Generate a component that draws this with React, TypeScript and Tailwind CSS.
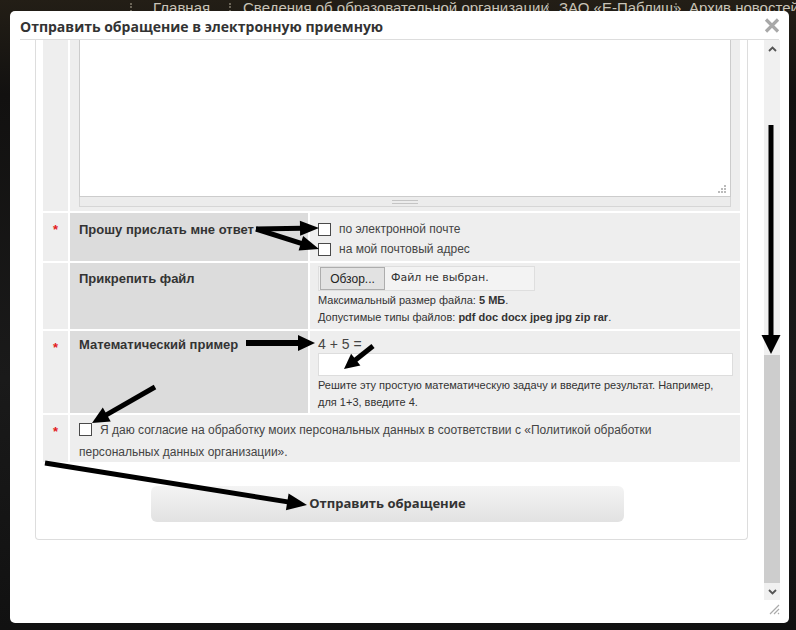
import React from "react";

type ArrowProps = { x1: number; y1: number; x2: number; y2: number; w?: number; hl?: number; hw?: number };

function Arrow({ x1, y1, x2, y2, w = 5, hl = 18, hw = 16 }: ArrowProps) {
  const dx = x2 - x1;
  const dy = y2 - y1;
  const len = Math.hypot(dx, dy);
  const ux = dx / len;
  const uy = dy / len;
  const bx = x2 - ux * hl;
  const by = y2 - uy * hl;
  const px = -uy;
  const py = ux;
  return (
    <g>
      <line x1={x1} y1={y1} x2={bx + ux * 2} y2={by + uy * 2} stroke="#000" strokeWidth={w} />
      <polygon
        points={`${x2},${y2} ${bx + (px * hw) / 2},${by + (py * hw) / 2} ${bx - (px * hw) / 2},${by - (py * hw) / 2}`}
        fill="#000"
      />
    </g>
  );
}

function Sep() {
  return <span className="mt-[3px] h-[9px] w-0 border-l-2 border-dotted border-[#6b6558]" />;
}

function Checkbox() {
  return <span className="inline-block h-[13px] w-[13px] shrink-0 border border-[#4a4a4a] bg-white" />;
}

function Star() {
  return (
    <div className="flex w-[25px] shrink-0 justify-center bg-[#eeeeee] pt-[10px]">
      <span className="text-[13px] leading-[14px] font-bold text-[#e31b1b]">*</span>
    </div>
  );
}

export default function App() {
  const arial = { fontFamily: '"Liberation Sans", Arial, sans-serif' };
  return (
    <div
      className="relative h-[630px] w-[796px] overflow-hidden bg-[linear-gradient(180deg,#231e16_0%,#121110_15%,#1a1a1a_60%,#111_100%)]"
      style={arial}
    >
      {/* site nav behind the modal */}
      <div className="flex h-[11px] overflow-hidden whitespace-nowrap text-[15px] leading-[15px] text-[#c9c4b8]">
        <div className="w-[130px] shrink-0" />
        <Sep />
        <div className="w-[21px] shrink-0" />
        <div className="w-[76px] shrink-0">Главная</div>
        <Sep />
        <div className="w-[12px] shrink-0" />
        <div className="w-[304px] shrink-0">Сведения об образовательной организации</div>
        <Sep />
        <div className="w-[10px] shrink-0" />
        <div className="w-[116px] shrink-0">ЗАО «Е-Паблиш»</div>
        <Sep />
        <div className="w-[12px] shrink-0" />
        <div className="shrink-0">Архив новостей</div>
      </div>

      {/* dialog */}
      <div className="ml-[10px] flex h-[612px] w-[779px] flex-col rounded-[5px] bg-white">
        <div className="mx-[10px] flex h-[29px] shrink-0 items-start justify-between border-b border-[#dddddd]">
          <div
            className="mt-[8px] text-[14px] leading-[16px] font-bold text-[#333]"
            style={{ fontFamily: '"Open Sans", sans-serif' }}
          >
            Отправить обращение в электронную приемную
          </div>
          <svg width="16" height="15" viewBox="0 0 16 15" className="mt-[7px] mr-[-1px]">
            <path d="M2 1.5 L14 13.5 M14 1.5 L2 13.5" stroke="#a8a8a8" strokeWidth="3.2" />
          </svg>
        </div>

        <div className="flex min-h-0 flex-1">
          {/* scrolled content */}
          <div className="w-[754px] shrink-0 overflow-hidden pl-[25px] pr-[16px]">
            <div className="rounded-b-[4px] border border-t-0 border-[#dddddd] px-[7px] pb-[17px]">
              <div className="flex flex-col gap-[2px] text-[#333]">
                {/* textarea row */}
                <div className="flex h-[171px] gap-[2px]">
                  <div className="w-[25px] shrink-0 bg-[#eeeeee]" />
                  <div className="flex-1 bg-[#eeeeee] px-[9px]">
                    <div className="relative h-[157px] border-x border-b border-[#cccccc] bg-white">
                      <svg width="9" height="9" viewBox="0 0 9 9" className="absolute right-[3px] bottom-[2px]">
                        <rect x="6" y="0" width="2" height="2" fill="#bbb" />
                        <rect x="3" y="3" width="2" height="2" fill="#bbb" />
                        <rect x="6" y="3" width="2" height="2" fill="#bbb" />
                        <rect x="0" y="6" width="2" height="2" fill="#bbb" />
                        <rect x="3" y="6" width="2" height="2" fill="#bbb" />
                        <rect x="6" y="6" width="2" height="2" fill="#bbb" />
                      </svg>
                    </div>
                    <div className="flex h-[10px] items-center justify-center border-x border-b border-[#d6d6d6] bg-[#ececec]">
                      <div className="flex w-[26px] flex-col gap-[2px]">
                        <div className="h-px bg-[#c4c4c4]" />
                        <div className="h-px bg-[#c4c4c4]" />
                      </div>
                    </div>
                  </div>
                </div>

                {/* reply row */}
                <div className="flex h-[48px] gap-[2px]">
                  <Star />
                  <div className="w-[238px] shrink-0 bg-[#dcdcdc] pt-[9px] pl-[9px] text-[13px] leading-[15px] font-bold">
                    Прошу прислать мне ответ
                  </div>
                  <div className="flex flex-1 flex-col gap-[7px] bg-[#eeeeee] pt-[10px] pl-[8px] text-[12px] leading-[13px] text-[#444]">
                    <div className="flex items-center gap-[8px]">
                      <Checkbox />
                      <span>по электронной почте</span>
                    </div>
                    <div className="flex items-center gap-[8px]">
                      <Checkbox />
                      <span>на мой почтовый адрес</span>
                    </div>
                  </div>
                </div>

                {/* file row */}
                <div className="flex h-[66px] gap-[2px]">
                  <div className="w-[25px] shrink-0 bg-[#eeeeee]" />
                  <div className="w-[238px] shrink-0 bg-[#dcdcdc] pt-[8px] pl-[9px] text-[13px] leading-[15px] font-bold">
                    Прикрепить файл
                  </div>
                  <div className="flex-1 bg-[#eeeeee] pt-[3px] pl-[8px]">
                    <div className="flex h-[25px] w-[217px] items-center border border-[#dedede] bg-[#f3f3f3]">
                      <div className="ml-px flex h-[23px] w-[65px] items-center justify-center border border-[#adadad] bg-[#e2e2e2] text-[12px] text-[#222]">
                        Обзор...
                      </div>
                      <span
                        className="ml-[6px] text-[11px] text-[#333]"
                        style={{ fontFamily: '"DejaVu Sans", sans-serif' }}
                      >
                        Файл не выбран.
                      </span>
                    </div>
                    <div className="mt-[1px] text-[11px] leading-[17px]">
                      Максимальный размер файла: <b>5 МБ</b>.
                    </div>
                    <div className="text-[11px] leading-[17px]">
                      Допустимые типы файлов: <b>pdf doc docx jpeg jpg zip rar</b>.
                    </div>
                  </div>
                </div>

                {/* math row */}
                <div className="flex h-[82px] gap-[2px]">
                  <Star />
                  <div className="w-[238px] shrink-0 bg-[#dcdcdc] pt-[6px] pl-[9px] text-[13px] leading-[15px] font-bold">
                    Математический пример
                  </div>
                  <div className="flex-1 bg-[#eeeeee] pt-[5px] pl-[8px] pr-[7px]">
                    <div className="text-[14px] leading-[16px] text-[#444]">4 + 5 =</div>
                    <div className="mt-[1px] h-[23px] border border-[#dddddd] bg-white" />
                    <div className="mt-[1px] text-[11px] leading-[17px]">
                      Решите эту простую математическую задачу и введите результат. Например,
                      <br />
                      для 1+3, введите 4.
                    </div>
                  </div>
                </div>

                {/* consent row */}
                <div className="flex h-[47px] gap-[2px]">
                  <Star />
                  <div className="flex-1 bg-[#eeeeee] pt-[5px] pl-[9px] pr-[10px] text-[12px] leading-[20px] text-[#444]">
                    <span className="mr-[8px] inline-block align-[-2px]">
                      <Checkbox />
                    </span>
                    Я даю согласие на обработку моих персональных данных в соответствии с «Политикой обработки
                    персональных данных организации».
                  </div>
                </div>
              </div>

              <div
                className="mt-[24px] ml-[108px] flex h-[36px] w-[473px] items-center justify-center rounded-[6px] bg-[linear-gradient(180deg,#f4f4f4,#e2e2e2)] text-[13px] font-bold text-[#333]"
                style={{ fontFamily: '"Open Sans", sans-serif' }}
              >
                Отправить обращение
              </div>
            </div>
          </div>

          {/* scrollbar */}
          <div className="flex w-[16px] shrink-0 flex-col">
            <div className="flex h-[560px] flex-col bg-[#f0f0f0]">
              <div className="flex h-[17px] items-center justify-center">
                <svg width="9" height="6" viewBox="0 0 9 6">
                  <path d="M1 5 L4.5 1.5 L8 5" stroke="#555" strokeWidth="1.8" fill="none" />
                </svg>
              </div>
              <div className="h-[298px]" />
              <div className="h-[228px] bg-[#cdcdcd]" />
              <div className="flex h-[17px] items-center justify-center">
                <svg width="9" height="6" viewBox="0 0 9 6">
                  <path d="M1 1 L4.5 4.5 L8 1" stroke="#555" strokeWidth="1.8" fill="none" />
                </svg>
              </div>
            </div>
            <div className="flex justify-end pt-[3px]">
              <svg width="12" height="12" viewBox="0 0 12 12">
                <path d="M11 2 L2 11 M11 6 L6 11 M11 10 L10 11" stroke="#aaa" strokeWidth="1.2" />
              </svg>
            </div>
          </div>
        </div>
      </div>

      {/* annotation arrows */}
      <svg className="pointer-events-none absolute top-0 left-0" width="796" height="630">
        <Arrow x1={256} y1={229} x2={319} y2={228} w={5} hl={19} hw={15} />
        <Arrow x1={256} y1={229} x2={319} y2={249} w={5} hl={19} hw={15} />
        <Arrow x1={246} y1={343} x2={315} y2={343} w={6} hl={17} hw={16} />
        <Arrow x1={373} y1={346} x2={344} y2={369} w={5} hl={15} hw={15} />
        <Arrow x1={155} y1={387} x2={92} y2={423} w={5} hl={17} hw={16} />
        <Arrow x1={45} y1={463} x2={307} y2={505} w={5} hl={20} hw={17} />
        <Arrow x1={771} y1={125} x2={771} y2={354} w={5} hl={19} hw={19} />
      </svg>
    </div>
  );
}
